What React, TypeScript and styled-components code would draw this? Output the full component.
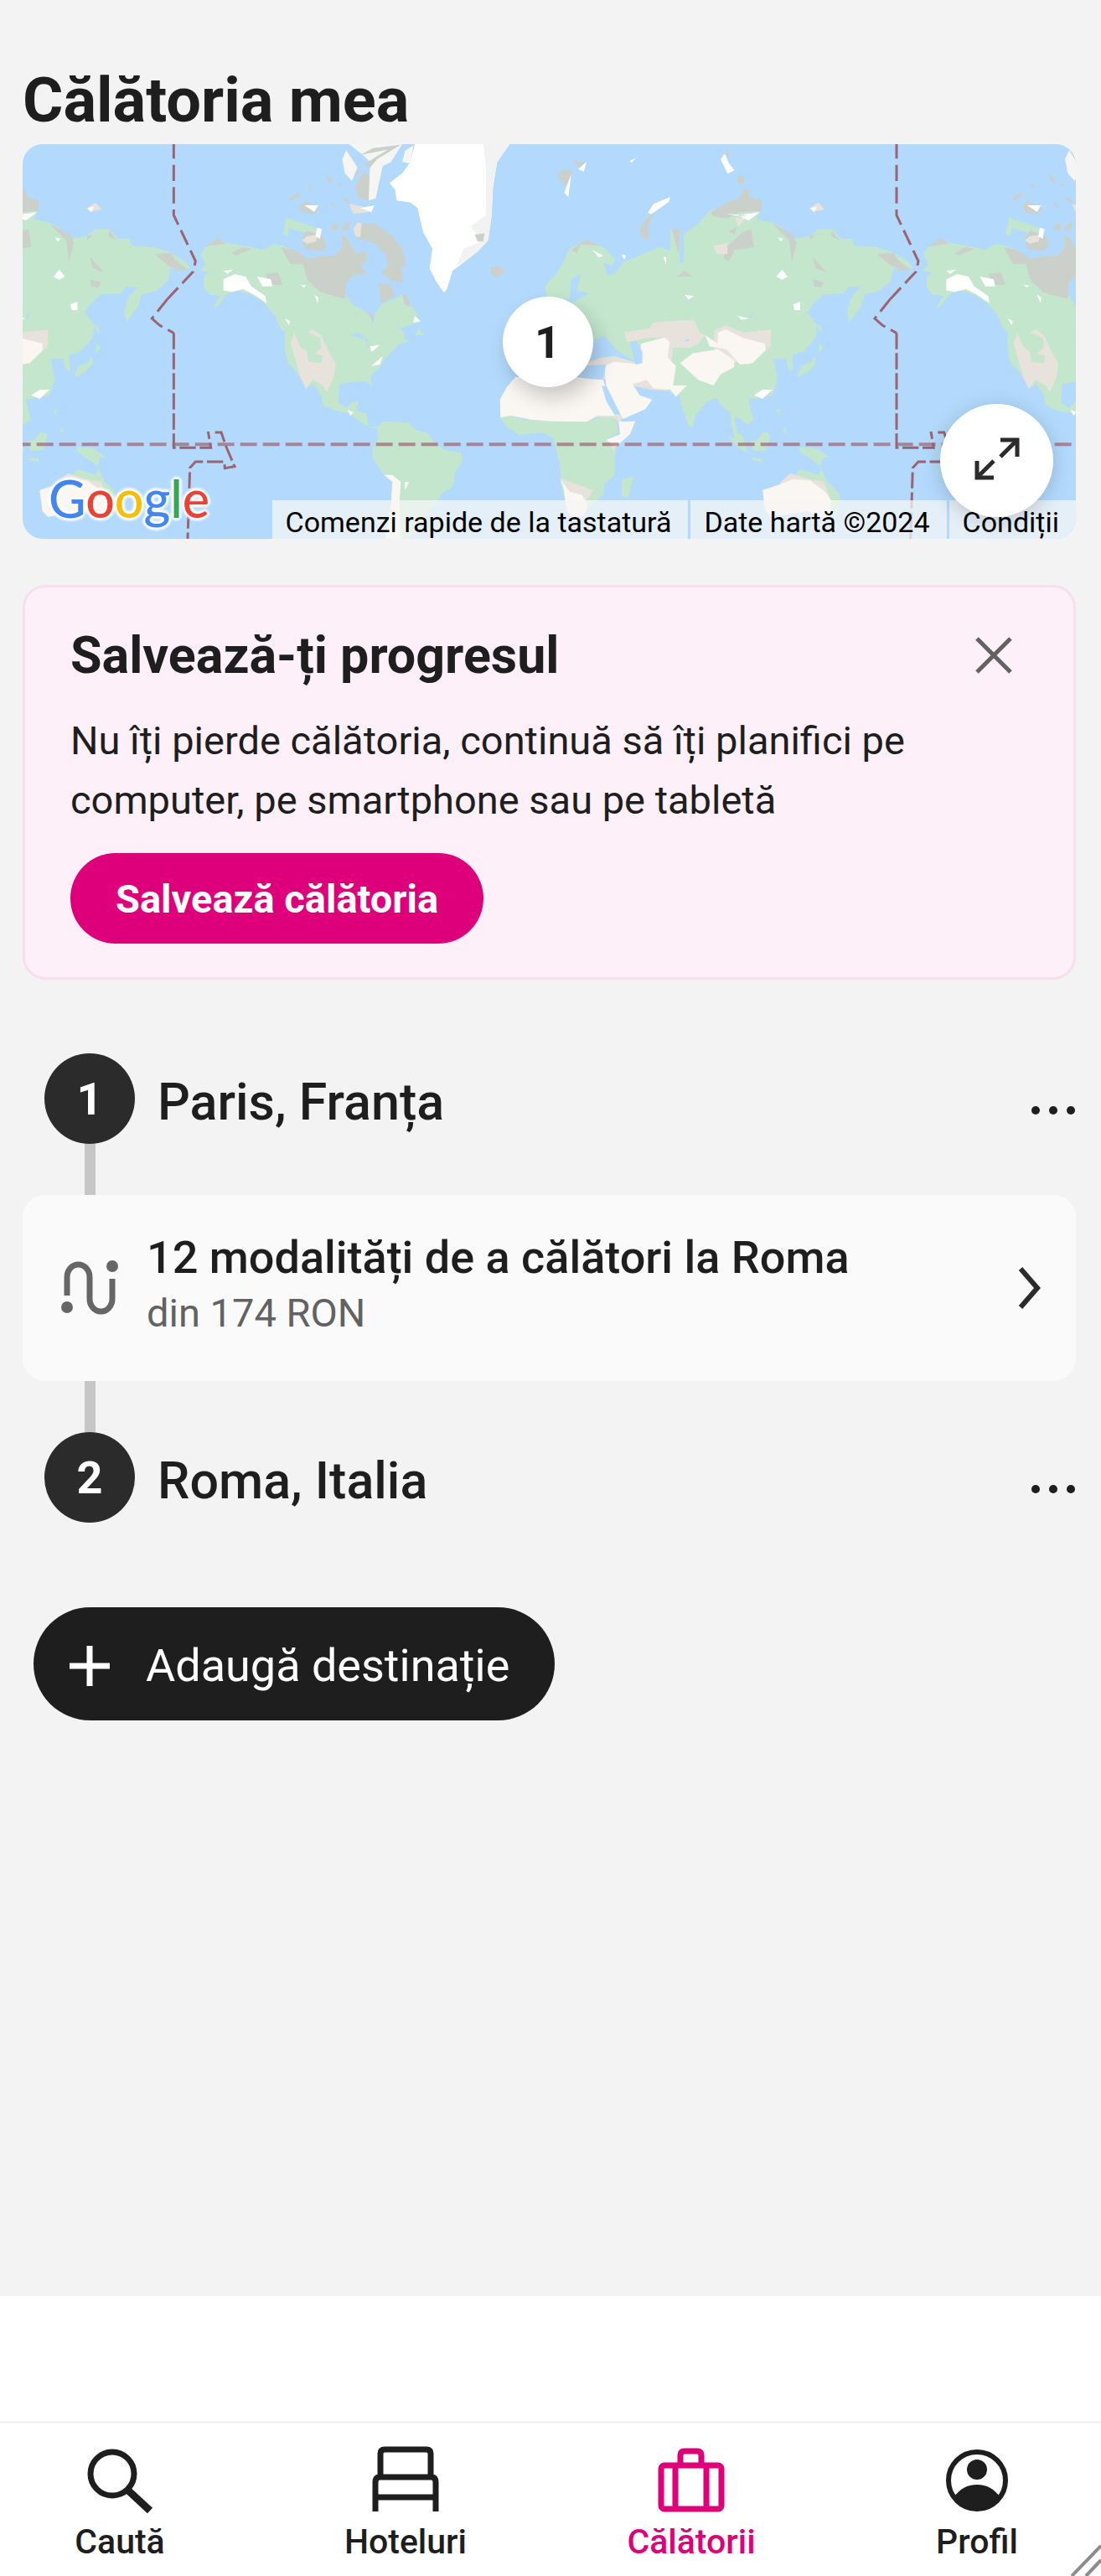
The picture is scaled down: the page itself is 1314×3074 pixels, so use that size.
import React from "react";
import styled, { createGlobalStyle } from "styled-components";

const ink = "#1e1e1e";
const pink = "#de007b";

const GlobalStyle = createGlobalStyle`
  *, *::before, *::after { box-sizing: border-box; }
  body {
    margin: 0;
    background: #fff;
    color: ${ink};
    font-family: Roboto, "Liberation Sans", sans-serif;
  }
  button { font: inherit; color: inherit; border: 0; padding: 0; background: none; cursor: pointer; }
  a { color: inherit; text-decoration: none; }
  h1, h2, h3, p, ul { margin: 0; padding: 0; list-style: none; }
  svg { display: block; flex: none; }
`;

const Page = styled.div`
  display: flex;
  flex-direction: column;
  min-height: 100vh;
`;

const Main = styled.main`
  flex: 1;
  padding: 78px 30px 80px 27px;
  background: #f3f3f3;
`;

const PageTitle = styled.h1`
  font-size: 74px;
  line-height: 84px;
  font-weight: 700;
  margin-bottom: 10px;
`;

const MapFrame = styled.section`
  position: relative;
  height: 471px;
  border-radius: 24px;
  overflow: hidden;
  background: #b3dafc;
`;

const MapArt = styled.svg`
  width: 100%;
  height: 100%;
`;

const Pin = styled.button`
  position: absolute;
  top: 182px;
  left: 50%;
  width: 108px;
  height: 108px;
  margin-left: -56px;
  border-radius: 50%;
  background: #fff;
  box-shadow: 6px 12px 24px rgba(0, 0, 0, 0.2);
  && {
    font-size: 54px;
    font-weight: 700;
  }
`;

const ExpandButton = styled.button`
  position: absolute;
  right: 27px;
  bottom: 26px;
  display: grid;
  place-items: center;
  width: 135px;
  height: 135px;
  border-radius: 50%;
  background: #fff;
  box-shadow: 0 4px 24px rgba(0, 0, 0, 0.18);
  && {
    padding-bottom: 4px;
  }
`;

const GoogleMark = styled.a`
  position: absolute;
  left: 31px;
  bottom: 8px;
  font-family: Lato, Roboto, sans-serif;
  font-size: 61px;
  line-height: 80px;
  font-weight: 500;
  text-shadow: 0 0 4px #fff, 0 0 4px #fff, 3px 0 3px #fff, -3px 0 3px #fff, 0 3px 3px #fff, 0 -3px 3px #fff;
`;

const Letter = styled.span<{ $color: string }>`
  color: ${(p) => p.$color};
`;

const Attribution = styled.div`
  position: absolute;
  right: 0;
  bottom: 0;
  display: flex;
  gap: 3px;
`;

const attributionItem = `
  height: 46px;
  padding: 6px 20px 0 16px;
  background: rgba(245, 245, 245, 0.75);
  color: #000;
  font-size: 34px;
  line-height: 40px;
`;

const ShortcutsButton = styled.button`
  && { ${attributionItem} }
`;
const MapDate = styled.span`
  ${attributionItem}
`;
const TermsLink = styled.a`
  ${attributionItem}
`;

const SaveCard = styled.section`
  margin-top: 55px;
  padding: 45px 54px 40px;
  border: 3px solid #f9deec;
  border-radius: 27px;
  background: #fdf0f8;
`;

const SaveHeader = styled.div`
  display: flex;
  align-items: center;
  justify-content: space-between;
`;

const SaveTitle = styled.h2`
  font-size: 61px;
  line-height: 72px;
  font-weight: 700;
`;

const CloseButton = styled.button`
  display: grid;
  place-items: center;
  width: 82px;
  height: 72px;
`;

const SaveText = styled.p`
  max-width: 1040px;
  margin: 30px 0 28px;
  font-size: 47px;
  line-height: 71px;
`;

const SaveButton = styled.button`
  && {
    height: 108px;
    padding: 0 54px;
    border-radius: 54px;
    background: ${pink};
    color: #fff;
    font-size: 47px;
    font-weight: 700;
  }
`;

const Itinerary = styled.section`
  margin-top: 88px;
`;

const StopRow = styled.div`
  display: flex;
  align-items: center;
  gap: 27px;
  padding-left: 26px;
`;

const StopNumber = styled.span`
  display: grid;
  place-items: center;
  flex: none;
  width: 108px;
  height: 108px;
  border-radius: 50%;
  background: #2b2b2b;
  color: #fff;
  font-size: 54px;
  font-weight: 700;
`;

const StopName = styled.h3`
  flex: 1;
  padding-top: 8px;
  font-size: 61px;
  line-height: 72px;
  font-weight: 500;
`;

const MoreButton = styled.button`
  && {
    padding: 28px 0 0 20px;
  }
`;

const Connector = styled.div`
  width: 13px;
  height: 61px;
  margin-left: 74px;
  background: #c6c6c6;
`;

const RouteCard = styled.a`
  display: flex;
  align-items: center;
  gap: 34px;
  height: 222px;
  padding: 0 42px 0 46px;
  border-radius: 27px;
  background: #fafafa;
`;

const RouteText = styled.span`
  display: flex;
  flex-direction: column;
  flex: 1;
  padding-bottom: 6px;
`;

const RouteTitle = styled.span`
  font-size: 54px;
  line-height: 66px;
  font-weight: 500;
`;

const RoutePrice = styled.span`
  color: #626262;
  font-size: 47px;
  line-height: 66px;
`;

const AddButton = styled.button`
  && {
    display: flex;
    align-items: center;
    gap: 42px;
    height: 135px;
    margin: 101px 0 0 13px;
    padding: 4px 54px 0 42px;
    border-radius: 68px;
    background: ${ink};
    color: #fff;
    font-size: 54px;
  }
`;

const BottomSpace = styled.div`
  height: 149px;
`;

const TabBar = styled.nav`
  position: relative;
  border-top: 3px solid #f2f2f2;
  padding: 27px 73px 17px 68px;
`;

const TabList = styled.ul`
  display: flex;
  justify-content: space-between;
`;

const Tab = styled.a<{ $active?: boolean }>`
  display: flex;
  flex-direction: column;
  align-items: center;
  gap: 10px;
  width: 150px;
  color: ${(p) => (p.$active ? pink : ink)};
  font-size: 41px;
  line-height: 48px;
  font-weight: 500;
`;

const Grip = styled.svg`
  position: absolute;
  right: 0;
  bottom: 0;
`;

const green = "#c3e6cd";
const gray = "#cbd0ca";
const beige = "#e7e2db";
const cream = "#faf7f3";

const World = () => (
  <>
    <g fill={green}>
      <path d="M118 400L135 375 180 350 220 360 300 375 340 385 380 362 410 370 450 385 480 400 500 418 560 405 600 405 625 375 622 340 640 335 655 370 680 400 710 385 715 420 690 440 715 470 670 475 640 500 635 540 660 580 700 600 725 620 735 650 745 610 765 580 800 565 840 545 870 580 890 610 905 642 870 655 830 665 850 685 848 705 872 708 830 722 800 750 775 780 760 805 725 840 733 872 710 855 660 858 615 865 610 930 640 950 660 930 685 925 675 960 712 970 720 1018 690 1000 650 970 600 960 555 940 550 905 520 865 500 880 480 850 460 820 430 790 420 740 420 680 400 660 385 620 340 570 300 545 250 530 210 545 180 585 163 598 175 570 190 550 150 545 130 520 130 480 150 465 115 460 135 435Z" />
      <path d="M413 330L425 268 450 280 490 290 540 310 530 330 480 320 435 305 430 335Z" />
      <path d="M885 690L900 665 918 690Z" />
      <path d="M720 1020L755 1018 770 1000 860 1002 890 1030 930 1040 960 1080 990 1100 1050 1110 1058 1140 1030 1180 1022 1230 980 1260 950 1310 900 1370 860 1420 790 1420 800 1300 805 1210 775 1190 735 1130 735 1090 755 1060 750 1025Z" />
      <path d="M1350 515L1400 460 1440 380 1500 350 1560 375 1605 420 1590 440 1560 430 1575 475 1600 470 1630 430 1700 400 1760 375 1800 388 1800 310 1835 310 1833 430 1848 430 1848 330 1900 290 1940 245 2000 225 2128 230 2110 275 2160 285 2200 305 2240 345 2300 335 2330 310 2380 310 2410 345 2450 345 2460 370 2540 375 2590 390 2650 425 2672 450 2640 455 2600 450 2590 495 2550 530 2495 545 2480 590 2440 645 2433 600 2450 550 2480 520 2440 515 2420 540 2350 545 2310 580 2290 610 2325 650 2320 700 2280 745 2235 765 2240 820 2222 810 2215 775 2170 775 2185 850 2165 905 2120 915 2080 920 2097 990 2075 1012 2045 985 2028 985 2040 1040 2060 1050 2075 1110 2040 1090 2005 1050 2030 1060 2018 1010 2015 965 1985 945 1965 915 1930 930 1890 975 1880 1022 1867 1015 1840 945 1835 910 1800 895 1720 800 1670 700 1650 760 1610 745 1560 690 1520 720 1500 790 1300 790 1240 830 1280 700 1400 600 1510 540 1465 530 1480 470 1445 490 1440 560 1360 555Z" />
      <path d="M1610 745L1660 690 1700 700 1780 690 1900 700 1960 700 2000 780 1830 900 1790 880 1700 800Z" />
      <path d="M2255 830L2270 800 2305 785 2318 765 2322 790 2300 815 2260 840ZM2328 755L2335 720 2350 735ZM2325 650L2340 660 2345 685 2330 670ZM2180 955L2192 955 2188 980ZM2200 1030L2215 1020 2215 1040Z" />
      <path d="M2085 1070L2110 1065 2135 1035 2158 1045 2145 1100 2100 1105ZM2090 1130L2125 1130 2130 1145 2095 1138ZM2262 1090L2320 1095 2368 1125 2345 1130 2340 1160 2290 1125 2262 1105Z" />
      <path d="M2245 1195L2265 1170 2300 1180 2330 1190 2340 1165 2360 1210 2400 1250 2412 1290 2400 1330 2370 1350 2330 1345Z" />
      <path d="M1192 985L1230 978 1280 992 1370 998 1500 995 1560 985 1605 985 1615 1040 1570 1062 1610 1075 1600 1140 1602 1190 1565 1220 1560 1260 1530 1290 1500 1320 1460 1345 1430 1320 1410 1230 1405 1150 1380 1060 1340 1038 1260 1048 1215 1020Z" />
      <path d="M1627 1205L1668 1195 1650 1270 1625 1268Z" />
    </g>
    <g fill={gray}>
      <path d="M405 375L450 385 485 403 500 418 560 405 600 405 625 375 622 335 640 335 655 370 680 400 710 385 715 420 690 440 715 470 670 475 640 500 635 560 580 545 545 535 500 490 485 435 440 435Z" />
      <path d="M690 290L740 290 800 330 840 380 855 440 835 445 845 500 800 495 765 465 790 440 780 400 740 360 680 345Z" />
      <path d="M755 505L800 508 815 550 765 575ZM840 545L855 545 872 590 850 580ZM715 610L740 620 735 640Z" />
      <path d="M135 372L180 342 210 362ZM230 395L270 375 300 380 245 405ZM350 470L395 465 412 510 370 510Z" />
      <path d="M470 235L490 210 545 235 525 258 485 250ZM430 205L470 178 475 190 445 208ZM560 110L590 130 585 150ZM500 160L515 150 510 170ZM610 140L625 155 615 158ZM585 210L605 230 590 230ZM620 190L655 210 645 220ZM480 345L500 315 555 335 570 375 540 390 490 380ZM590 290L612 290 605 320 585 310ZM625 300L655 280 645 315 625 318Z" />
      <path d="M1155 450L1180 442 1213 460 1180 482 1160 475Z" />
      <path d="M645 30L685 100 680 120 650 100ZM670 160L705 100 725 130 725 208 685 200Z" />
      <path d="M1945 250L2000 215 2045 200 2065 165 2080 170 2085 195 2128 210 2125 245 2050 250 2000 272 1955 265Z" />
      <path d="M1690 310L1720 265 1740 255 1720 300 1723 350 1695 335ZM1805 310L1835 310 1830 400ZM2010 320L2040 300 2030 330ZM2060 320L2090 310 2100 375 2030 385 2010 425 1990 415 2005 370ZM2165 290L2240 330 2252 360 2235 430 2225 350ZM2300 335L2320 330 2300 350ZM2380 315L2405 350 2375 335ZM2310 410L2360 465 2320 450ZM2310 490L2350 500 2340 520 2315 515ZM2540 400L2600 395 2615 420 2660 455 2630 460 2590 440ZM1825 480L1850 460 1880 480ZM1445 385L1500 348 1550 370 1480 365 1465 395Z" />
      <path d="M1395 115L1420 95 1450 100 1435 165 1405 135ZM1450 65L1495 70 1475 90ZM2040 120L2065 120 2060 150 2040 145ZM1990 40L2010 30 2010 50Z" />
    </g>
    <g fill={beige}>
      <path d="M440 715L455 683 475 730 500 750 505 785 550 790 555 765 525 755 550 735 545 700 500 680 520 668 550 690 575 745 602 790 595 840 570 895 555 870 520 850 495 882 475 840 455 770Z" />
      <path d="M480 350L500 335 540 330 530 355 500 362ZM665 310L680 285 695 290 690 340 672 335ZM650 220L700 230 720 250 665 255ZM2300 235L2330 215 2352 240 2310 248ZM1955 370L2005 360 2005 400 1965 400ZM2030 270L2070 270 2045 300Z" />
      <path d="M1635 680L1725 665 1740 645 1790 640 1885 635 1905 680 1925 690 1900 720 1870 735 1810 735 1805 785 1790 780 1780 700 1720 700 1645 715ZM1960 670L2000 655 2060 680 2160 670 2160 730 2080 795 2000 780 1950 730Z" />
      <path d="M1500 790L1550 770 1600 765 1700 795 1700 840 1800 890 1730 885 1520 840ZM1405 1200L1440 1215 1525 1245 1500 1280 1440 1270ZM2190 1220L2230 1185 2300 1205 2350 1215 2372 1270 2350 1290ZM1530 985L1560 970 1625 975 1625 1015 1600 985ZM1575 1060L1615 1060 1595 1105Z" />
    </g>
    <g fill={cream}>
      <path d="M1192 985L1190 920 1215 875 1245 840 1430 835 1500 845 1560 850 1580 920 1610 970 1600 978 1540 978 1500 1000 1370 998 1300 992 1230 978Z" />
      <path d="M1565 800L1600 785 1690 795 1695 720 1780 698 1798 715 1790 770 1820 800 1810 870 1860 870 1820 910 1800 885 1740 880 1715 850 1665 865 1690 905 1735 920 1710 955 1630 990 1600 930 1570 870Z" />
      <path d="M1835 790L1880 755 1970 740 2030 780 2028 805 1980 830 1955 870 1900 850ZM1925 690L1970 720 1970 680 2000 670 2060 700 2140 720 2140 745 2095 790 2050 795 2000 740 1940 730Z" />
      <path d="M1615 1000L1675 998 1655 1045 1605 1090 1570 1065 1620 1045ZM1405 1205L1440 1250 1485 1262 1505 1300 1490 1335 1455 1345 1430 1320 1418 1240Z" />
      <path d="M2130 1245L2190 1225 2240 1205 2300 1210 2355 1250 2375 1280 2370 1345 2330 1340 2290 1320 2230 1330 2160 1340 2140 1320Z" />
      <path d="M775 1190L805 1190 835 1215 830 1290 835 1420 780 1420 800 1290 805 1215Z" />
    </g>
    <g fill="#fff">
      <path d="M885 6L1225 6 1180 70 1165 160 1160 260 1148 350 1110 390 1060 430 1020 460 1000 525 990 538 960 495 938 450 948 380 915 320 895 235 870 215 820 208 815 170 795 145 840 110 870 70Z" />
      <path fill="#f2f2f2" d="M1130 6L1225 6 1180 70 1165 160 1160 260 1148 350 1110 390 1060 430 1035 440 1060 380 1125 355 1085 300 1140 260 1140 90Z" />
      <path fill={gray} d="M1100 330L1135 325 1130 355 1110 355Z" />
      <path fill="#f5f5f4" d="M650 6L840 6 800 70 770 85 745 200 720 208 725 70 700 45ZM625 60L640 28 680 90 660 138 635 110ZM840 70L850 30 880 10 870 75Z" />
      <path fill={gray} d="M735 20L835 8 750 60 725 90 700 80 790 25 690 45Z" />
      <path d="M200 490L240 472 280 480 300 515 350 550 355 575 310 545 270 525 230 535 200 530ZM320 480L370 490 375 515 340 515ZM200 460L235 455 215 470ZM525 545L540 555 538 575ZM420 630L438 640 435 655ZM725 730L760 725 730 750ZM730 800L770 765 760 795ZM885 620L905 640 880 645ZM645 958L665 965 655 978ZM535 305L552 310 545 345 530 335ZM690 235L740 225 730 250ZM490 225L540 225 525 248ZM850 1215L865 1215 850 1245ZM475 510L495 510 490 520Z" />
      <path d="M1720 250L1740 220 1800 195 1795 212 1730 258ZM1980 60L1995 40 2010 75 2030 100 2005 112ZM2040 260L2120 250 2080 280ZM2000 255L2050 265 2080 262ZM1470 95L1500 70 1490 105ZM1420 180L1445 115 1435 195ZM1655 65L1680 55 1660 72ZM2300 235L2325 230 2315 248ZM1520 385L1560 405 1545 412ZM1625 400L1642 405 1635 420ZM2180 480L2200 455 2220 480 2200 492ZM2240 580L2265 570 2265 600 2245 600ZM2040 620L2080 630 2055 635ZM1850 545L1885 550 1865 562ZM2100 905L2130 885 2165 885 2130 918ZM1775 410L1785 410 1785 435ZM2185 340L2205 345 2195 355Z" />
    </g>
    <g fill="#b3dafc">
      <path d="M655 690L680 680 715 705 722 735 705 705ZM1655 715L1680 712 1700 750 1700 790 1675 795ZM1555 870L1572 875 1615 970 1600 975 1570 925ZM1530 700L1600 735 1605 752 1530 760ZM1470 800L1570 795 1560 848 1470 840ZM1845 710L1870 703 1865 712ZM2080 625L2095 610 2090 630Z" />
    </g>
    <g fill="none" stroke="#9c6370" strokeWidth="9">
      <path strokeDasharray="58 22" d="M22 0V260L100 425 92 462 0 560" />
      <path strokeDasharray="58 22" d="M2588 560L2532 630 2560 655 2610 682" />
      <path strokeDasharray="58 14" d="M22 682V1093H155L145 1035M170 1038H192L210 1090 240 1160 205 1166 203 1143H100L80 1165 72 1420" />
    </g>
  </>
);

const WorldMap = () => (
  <MapArt viewBox="-519 6 3771 1413" preserveAspectRatio="xMidYMid slice" role="img" aria-label="Hartă">
    <g transform="translate(-2588 0)"><World /></g>
    <g transform="translate(2588 0)"><World /></g>
    <World />
    <path d="M-550 1081H3300" stroke="#9c6370" strokeOpacity="0.7" strokeWidth="12" strokeDasharray="60 21" fill="none" />
  </MapArt>
);

const ExpandIcon = () => (
  <svg width="56" height="56" viewBox="0 0 56 56" fill="none" stroke="#2b2b2b" strokeWidth="5">
    <path d="M32 5H52V25M51 6L32 25M24 50H4V30M5 49L24 30" />
  </svg>
);

const CloseIcon = () => (
  <svg width="44" height="44" viewBox="0 0 44 44" fill="none" stroke="#626262" strokeWidth="5">
    <path d="M2 2L42 42M42 2L2 42" />
  </svg>
);

const DotsIcon = () => (
  <svg width="54" height="12" viewBox="0 0 54 12" fill={ink}>
    <circle cx="6" cy="6" r="5" />
    <circle cx="27" cy="6" r="5" />
    <circle cx="48" cy="6" r="5" />
  </svg>
);

const RouteIcon = () => (
  <svg width="68" height="66" viewBox="0 0 68 66" fill="none" stroke="#666" strokeWidth="7">
    <path d="M7 42V20a13.5 15 0 0 1 27 0V46a13.5 15 0 0 0 27 0V22" />
    <g fill="#666" stroke="none">
      <circle cx="7" cy="56" r="7" />
      <circle cx="61" cy="7" r="7" />
    </g>
  </svg>
);

const ChevronIcon = () => (
  <svg width="26" height="50" viewBox="0 0 26 50" fill="none" stroke="#2b2b2b" strokeWidth="6">
    <path d="M2 2L22 25 2 48" />
  </svg>
);

const PlusIcon = () => (
  <svg width="50" height="50" viewBox="0 0 50 50" stroke="#fff" strokeWidth="7">
    <path d="M25 1V49M1 25H49" />
  </svg>
);

const SearchIcon = () => (
  <svg width="80" height="80" viewBox="0 0 80 80" fill="none" stroke="currentColor" strokeWidth="7">
    <circle cx="31" cy="33" r="26" />
    <path d="M49 52L76 77" strokeWidth="9" />
  </svg>
);

const BedIcon = () => (
  <svg width="80" height="80" viewBox="0 0 80 80" fill="none" stroke="currentColor" strokeWidth="7">
    <path d="M10 37V9Q10 4 15 4H65Q70 4 70 9V37M4 78V43Q4 37 9 37H71Q76 37 76 43V78M3 61H77" />
  </svg>
);

const SuitcaseIcon = () => (
  <svg width="80" height="80" viewBox="0 0 80 80" fill="none" stroke="currentColor" strokeWidth="7">
    <rect x="4" y="23" width="72" height="52" rx="4" />
    <path d="M27 22V11Q27 6 32 6H47Q52 6 52 11V22M21 22V76M58 22V76" />
  </svg>
);

const ProfileIcon = () => (
  <svg width="80" height="80" viewBox="0 0 80 80" fill="currentColor">
    <circle cx="40" cy="41" r="34" fill="none" stroke="currentColor" strokeWidth="6" />
    <circle cx="40" cy="28" r="12" />
    <path d="M12 61C20 51 28 46 40 46S60 51 68 61C62 71 52 77 40 77S18 71 12 61Z" />
  </svg>
);

const stops = ["Paris, Franța", "Roma, Italia"];

const tabs = [
  { label: "Caută", icon: <SearchIcon /> },
  { label: "Hoteluri", icon: <BedIcon /> },
  { label: "Călătorii", icon: <SuitcaseIcon />, active: true },
  { label: "Profil", icon: <ProfileIcon /> },
];

const logo = [
  ["G", "#4285f4"],
  ["o", "#ea4335"],
  ["o", "#fbbc05"],
  ["g", "#4285f4"],
  ["l", "#34a853"],
  ["e", "#ea4335"],
];

const Stop = ({ index }: { index: number }) => (
  <StopRow>
    <StopNumber>{index + 1}</StopNumber>
    <StopName>{stops[index]}</StopName>
    <MoreButton type="button" aria-label="Mai multe opțiuni">
      <DotsIcon />
    </MoreButton>
  </StopRow>
);

export default function App() {
  return (
    <Page>
      <GlobalStyle />
      <Main>
        <PageTitle>Călătoria mea</PageTitle>
        <MapFrame>
          <WorldMap />
          <GoogleMark href="#">
            {logo.map(([char, color], i) => (
              <Letter key={i} $color={color}>{char}</Letter>
            ))}
          </GoogleMark>
          <Attribution>
            <ShortcutsButton type="button">Comenzi rapide de la tastatură</ShortcutsButton>
            <MapDate>Date hartă ©2024</MapDate>
            <TermsLink href="#">Condiții</TermsLink>
          </Attribution>
          <Pin type="button">1</Pin>
          <ExpandButton type="button" aria-label="Extinde harta">
            <ExpandIcon />
          </ExpandButton>
        </MapFrame>

        <SaveCard>
          <SaveHeader>
            <SaveTitle>Salvează-ți progresul</SaveTitle>
            <CloseButton type="button" aria-label="Închide">
              <CloseIcon />
            </CloseButton>
          </SaveHeader>
          <SaveText>
            Nu îți pierde călătoria, continuă să îți planifici pe computer, pe smartphone sau pe tabletă
          </SaveText>
          <SaveButton type="button">Salvează călătoria</SaveButton>
        </SaveCard>

        <Itinerary>
          <Stop index={0} />
          <Connector />
          <RouteCard href="#">
            <RouteIcon />
            <RouteText>
              <RouteTitle>12 modalități de a călători la Roma</RouteTitle>
              <RoutePrice>din 174 RON</RoutePrice>
            </RouteText>
            <ChevronIcon />
          </RouteCard>
          <Connector />
          <Stop index={1} />
        </Itinerary>

        <AddButton type="button">
          <PlusIcon />
          Adaugă destinație
        </AddButton>
      </Main>
      <BottomSpace />
      <TabBar>
        <TabList>
          {tabs.map((tab) => (
            <li key={tab.label}>
              <Tab href="#" $active={tab.active}>
                {tab.icon}
                {tab.label}
              </Tab>
            </li>
          ))}
        </TabList>
        <Grip width="36" height="38" viewBox="0 0 36 38" stroke="#8c8c8c" strokeWidth="4" fill="none">
          <path d="M1 38L36 2M18 38L36 19" />
        </Grip>
      </TabBar>
    </Page>
  );
}
